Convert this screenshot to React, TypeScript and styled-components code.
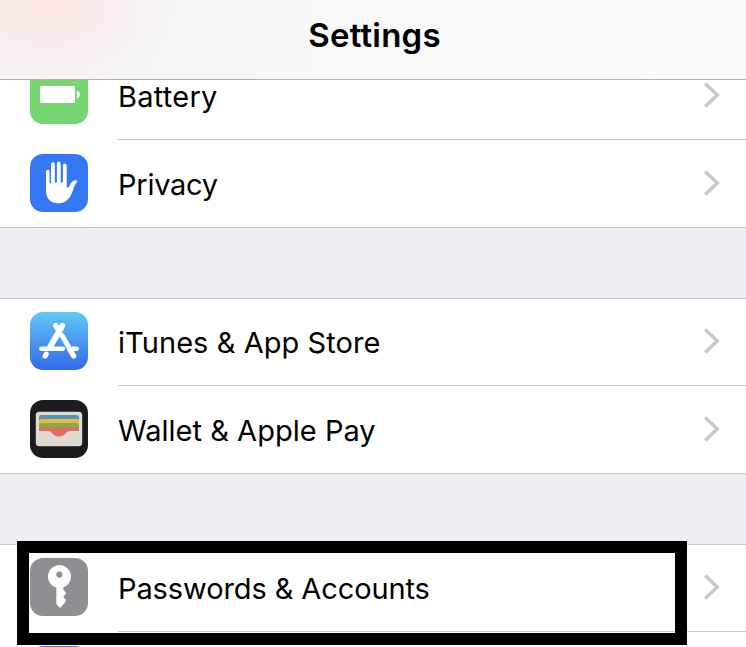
import React from "react";
import styled, { createGlobalStyle } from "styled-components";

const GlobalStyle = createGlobalStyle`
  body { margin: 0; background: #fff; }
  * { box-sizing: border-box; }
`;

const Screen = styled.div`
  position: relative;
  width: 746px;
  height: 647px;
  overflow: hidden;
  background: #efeef3;
  color: #000;
  font-family: Inter, "Liberation Sans", sans-serif;
  font-feature-settings: "calt" 0, "liga" 0;
`;

const Header = styled.header`
  position: relative;
  z-index: 1;
  height: 80px;
  display: flex;
  justify-content: center;
  padding: 14px 0 0 3px;
  border-bottom: 1px solid #b2b2b2;
  background:
    radial-gradient(ellipse 125px 90px at 52px 0, rgba(255, 226, 222, 0.7), rgba(255, 232, 226, 0)),
    linear-gradient(90deg, #f6f3f0 0, #f5f5f5 130px, #f8f8f8 330px, #fafafa 100%);
`;

const Title = styled.h1`
  margin: 0;
  font-size: 33px;
  line-height: 42px;
  font-weight: 600;
  letter-spacing: 0.2px;
`;

const List = styled.main`
  margin-top: -28px;
  display: flex;
  flex-direction: column;
  gap: 70px;
`;

const Group = styled.section`
  background: #fff;
`;

const Row = styled.div`
  height: 88px;
  display: flex;
  padding-left: 30px;
  ${Group} + ${Group} > &:first-child {
    box-shadow: inset 0 1px #c8c7cc;
  }
  ${Group} > &:last-child {
    border-bottom: 1px solid #c8c7cc;
  }
`;

const Tile = styled.svg`
  flex: none;
  width: 58px;
  height: 58px;
  margin: 14px 30px 0 0;
  border-radius: 13px;
`;

const RowBody = styled.div`
  flex: 1;
  display: flex;
  justify-content: space-between;
  align-items: center;
  padding: 0 25px 0 0;
  ${Row}:not(:last-child) > & {
    border-bottom: 1px solid #c8c7cc;
  }
`;

const Label = styled.span<{ $tracking: number }>`
  padding-top: 3px;
  font-size: 29px;
  line-height: 40px;
  white-space: nowrap;
  letter-spacing: ${(p) => p.$tracking}px;
`;

const Chevron = styled.svg`
  width: 18px;
  height: 28px;
  margin-top: -1px;
`;

const Highlight = styled.div`
  position: absolute;
  z-index: 2;
  left: 17px;
  top: 541px;
  width: 670px;
  height: 104px;
  border: 12px solid #000;
`;

const BatteryIcon = () => (
  <Tile viewBox="0 0 58 58">
    <rect width="58" height="58" fill="#76d672" />
    <rect x="10" y="20" width="35" height="17" rx="0.8" fill="#fff" />
    <path d="M46.8 24.8C51 25.6 51 31.4 46.8 32.2Z" fill="#fff" />
  </Tile>
);

const PrivacyIcon = () => (
  <Tile viewBox="0 0 58 58">
    <rect width="58" height="58" fill="#3478f6" />
    <path
      fill="#fff"
      d="M16 17.6a1.8 1.8 0 0 1 3.6 0V29h1.4V10.2a1.9 1.9 0 0 1 3.8 0V28.5h2.1V9.5a1.9 1.9 0 0 1 3.8 0V28.5h2.2V11.3a1.9 1.9 0 0 1 3.8 0V34c1.6-.3 2.5-1.8 3.4-3.4 1.4-2.6 3-4.6 6-4.4 1.2.1 1.5.8.9 1.6-1.7 2.1-2.6 4.5-3.7 7.4C40.8 42.5 37.3 49.3 28.5 49.3 19 49.3 16 43.5 16 36Z"
    />
  </Tile>
);

const AppStoreIcon = () => (
  <Tile viewBox="0 0 58 58">
    <defs>
      <linearGradient id="store" x1="0" y1="0" x2="0" y2="1">
        <stop offset="0" stopColor="#62c8f5" />
        <stop offset="1" stopColor="#3269e8" />
      </linearGradient>
    </defs>
    <rect width="58" height="58" fill="url(#store)" />
    <g stroke="#fff" strokeLinecap="round" fill="none">
      <path d="M11.4 36.7H32.8M42 36.7H46.7" strokeWidth="4.6" />
      <path d="M25.8 13.6 29.6 19.8" strokeWidth="5.4" />
      <path d="M32.3 13.7 20.2 34.8" strokeWidth="5.8" />
      <path d="M16.3 42 15 44.2" strokeWidth="5" />
      <path d="M32.2 24.2 43.6 44" strokeWidth="5.4" />
    </g>
    <path d="M30.6 25.6 36.9 36.6" stroke="#4697ef" strokeWidth="0.6" />
  </Tile>
);

const WalletIcon = () => (
  <Tile viewBox="0 0 58 58">
    <rect width="58" height="58" fill="#1c1c1e" />
    <rect x="5.8" y="11.8" width="46.4" height="34.4" rx="3.5" fill="#dddad1" />
    <path d="M9 31V17.3q0-2.3 2.3-2.3h35.4q2.3 0 2.3 2.3V31Z" fill="#5296bd" />
    <path d="M9 31V21.3q0-2.3 2.3-2.3h35.4q2.3 0 2.3 2.3V31Z" fill="#efb53c" />
    <path d="M9 31V25.3q0-2.3 2.3-2.3h35.4q2.3 0 2.3 2.3V31Z" fill="#79b34b" />
    <path
      d="M9 31V29.3q0-2.3 2.3-2.3h35.4q2.3 0 2.3 2.3V31H39.5C36 31 35.5 36.6 29 36.6S22 31 18.5 31Z"
      fill="#df6f5e"
    />
  </Tile>
);

const KeyIcon = () => (
  <Tile viewBox="0 0 58 58">
    <rect width="58" height="58" fill="#8e8e93" />
    <path
      fill="#fff"
      fillRule="evenodd"
      d="M26.3 29.6A11.5 11.5 0 1 1 33.3 29.4V31.2L36.2 35.5 33.3 38.8 36.2 42.3 34.6 45 30.2 50 26.3 46.2ZM29.4 13.5a3.1 3.1 0 1 0 0 6.2 3.1 3.1 0 0 0 0-6.2Z"
    />
  </Tile>
);

const BlueIcon = () => (
  <Tile viewBox="0 0 58 58">
    <rect width="58" height="58" fill="#3478f6" />
  </Tile>
);

interface Setting {
  label: string;
  tracking: number;
  Icon: React.FC;
}

const groups: Setting[][] = [
  [
    { label: "Battery", tracking: 0.25, Icon: BatteryIcon },
    { label: "Privacy", tracking: -0.25, Icon: PrivacyIcon },
  ],
  [
    { label: "iTunes & App Store", tracking: 0.06, Icon: AppStoreIcon },
    { label: "Wallet & Apple Pay", tracking: 0.03, Icon: WalletIcon },
  ],
  [
    { label: "Passwords & Accounts", tracking: -0.1, Icon: KeyIcon },
    { label: "", tracking: 0, Icon: BlueIcon },
  ],
];

export default function App() {
  return (
    <>
      <GlobalStyle />
      <Screen>
        <Header>
          <Title>Settings</Title>
        </Header>
        <List>
          {groups.map((group, g) => (
            <Group key={g}>
              {group.map(({ label, tracking, Icon }, i) => (
                <Row key={i}>
                  <Icon />
                  <RowBody>
                    <Label $tracking={tracking}>{label}</Label>
                    <Chevron viewBox="0 0 18 28">
                      <path d="M2.2 2.5 14.3 14 2.2 25.5" fill="none" stroke="#c7c7cc" strokeWidth="3.4" />
                    </Chevron>
                  </RowBody>
                </Row>
              ))}
            </Group>
          ))}
        </List>
        <Highlight />
      </Screen>
    </>
  );
}
